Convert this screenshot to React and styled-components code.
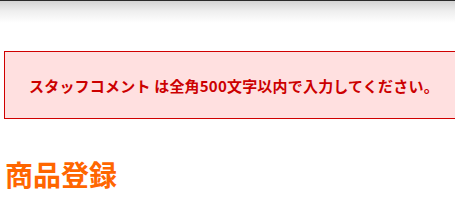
import React from "react";
import styled, { createGlobalStyle } from "styled-components";

const Global = createGlobalStyle`
  html, body { margin: 0; padding: 0; background: #fff; overflow: hidden; }
  body { font-family: "Noto Sans CJK JP", "Noto Sans", sans-serif; }
`;

const TopBar = styled.div`
  height: 22px;
  border-top: 1px solid #2a2a2a;
  background: linear-gradient(to bottom, #d4d4d4 0%, #eeeeee 45%, #ffffff 100%);
`;

const Main = styled.div`
  padding: 28px 0 0 4px;
`;

const ErrorBox = styled.div`
  width: 480px;
  height: 66px;
  box-sizing: content-box;
  border: 1px solid #d00000;
  background: #ffe0e0;
  display: flex;
  align-items: center;
  padding-left: 24px;
  color: #cc0000;
  font-weight: bold;
  font-size: 15px;
  letter-spacing: 0.2px;
  white-space: nowrap;
`;

const Title = styled.h1`
  margin: 39px 0 0 1px;
  color: #ff6600;
  font-size: 28px;
  font-weight: bold;
  line-height: 1.2;
`;

export default function App() {
  return (
    <>
      <Global />
      <TopBar />
      <Main>
        <ErrorBox>スタッフコメント は全角500文字以内で入力してください。</ErrorBox>
        <Title>商品登録</Title>
      </Main>
    </>
  );
}
